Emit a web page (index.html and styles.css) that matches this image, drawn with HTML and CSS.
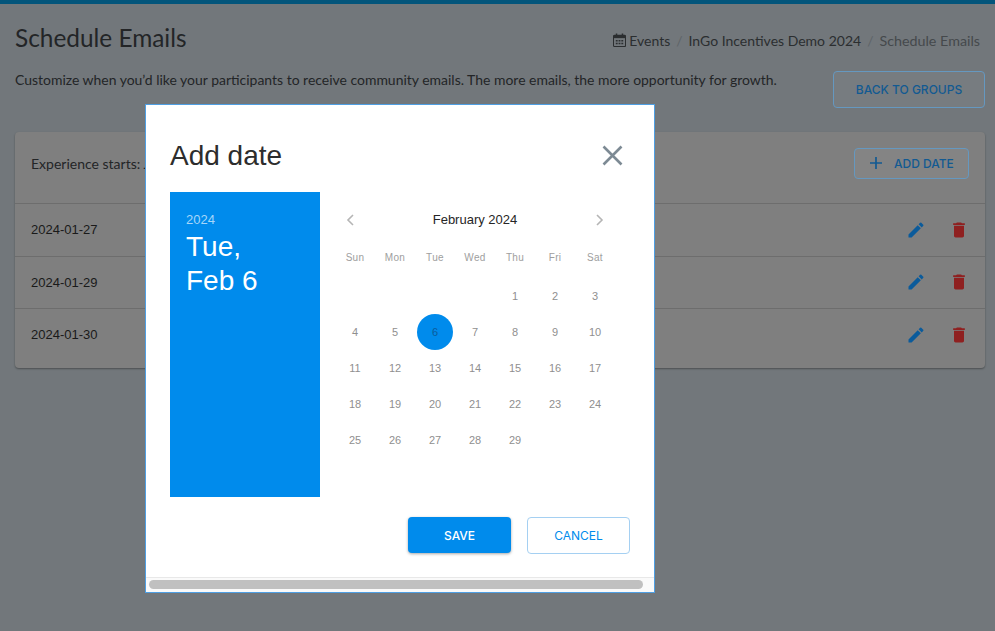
FILE: index.html
```html
<!DOCTYPE html>
<html lang="en">
<head>
  <meta charset="UTF-8">
  <meta name="viewport" content="width=device-width, initial-scale=1.0">
  <title>Schedule Emails</title>
  <link rel="stylesheet" href="styles.css">
</head>
<body>
  <div class="topbar"></div>

  <main class="page">
    <div class="page-head">
      <h1>Schedule Emails</h1>
      <nav class="crumbs">
        <svg class="crumb-icon" viewBox="0 0 14 15" width="13" height="14">
          <path d="M1.5 2.5h11a1 1 0 0 1 1 1v10a1 1 0 0 1-1 1h-11a1 1 0 0 1-1-1v-10a1 1 0 0 1 1-1z" fill="none" stroke="#2b2e30" stroke-width="1.2"/>
          <path d="M.5 3h13v2.5H.5z" fill="#2b2e30"/>
          <path d="M3 .5h1.6v3H3zM9.4 .5H11v3H9.4z" fill="#2b2e30"/>
          <path d="M3 7.5h2V9H3zM6 7.5h2V9H6zM9 7.5h2V9H9zM3 10.5h2V12H3zM6 10.5h2V12H6zM9 10.5h2V12H9z" fill="#2b2e30"/>
        </svg>
        <span>Events</span>
        <span class="sep">/</span>
        <span>InGo Incentives Demo 2024</span>
        <span class="sep">/</span>
        <span class="crumb-current">Schedule Emails</span>
      </nav>
    </div>

    <div class="intro">
      <p>Customize when you’d like your participants to receive community emails. The more emails, the more opportunity for growth.</p>
      <button class="btn-outline btn-back">BACK TO GROUPS</button>
    </div>

    <section class="card">
      <div class="card-head">
        <span>Experience starts: Jan 2024</span>
        <button class="btn-outline btn-add">
          <svg viewBox="0 0 12 12" width="12" height="12"><path d="M6 0v12M0 6h12" stroke="#125a92" stroke-width="1.7" fill="none"/></svg>
          ADD DATE
        </button>
      </div>

      <div class="date-row">
        <span>2024-01-27</span>
        <div class="row-actions">
          <svg viewBox="0 0 24 24" width="20" height="20"><path class="pencil" d="M3 17.25V21h3.75L17.81 9.94l-3.75-3.75L3 17.25zM20.71 7.04a1 1 0 0 0 0-1.41l-2.34-2.34a1 1 0 0 0-1.41 0l-1.83 1.83 3.75 3.75 1.83-1.83z"/></svg>
          <svg viewBox="0 0 24 24" width="20" height="20"><path class="trash" d="M6 19c0 1.1.9 2 2 2h8c1.1 0 2-.9 2-2V7H6v12zM19 4h-3.5l-1-1h-5l-1 1H5v2h14V4z"/></svg>
        </div>
      </div>
      <div class="date-row">
        <span>2024-01-29</span>
        <div class="row-actions">
          <svg viewBox="0 0 24 24" width="20" height="20"><path class="pencil" d="M3 17.25V21h3.75L17.81 9.94l-3.75-3.75L3 17.25zM20.71 7.04a1 1 0 0 0 0-1.41l-2.34-2.34a1 1 0 0 0-1.41 0l-1.83 1.83 3.75 3.75 1.83-1.83z"/></svg>
          <svg viewBox="0 0 24 24" width="20" height="20"><path class="trash" d="M6 19c0 1.1.9 2 2 2h8c1.1 0 2-.9 2-2V7H6v12zM19 4h-3.5l-1-1h-5l-1 1H5v2h14V4z"/></svg>
        </div>
      </div>
      <div class="date-row">
        <span>2024-01-30</span>
        <div class="row-actions">
          <svg viewBox="0 0 24 24" width="20" height="20"><path class="pencil" d="M3 17.25V21h3.75L17.81 9.94l-3.75-3.75L3 17.25zM20.71 7.04a1 1 0 0 0 0-1.41l-2.34-2.34a1 1 0 0 0-1.41 0l-1.83 1.83 3.75 3.75 1.83-1.83z"/></svg>
          <svg viewBox="0 0 24 24" width="20" height="20"><path class="trash" d="M6 19c0 1.1.9 2 2 2h8c1.1 0 2-.9 2-2V7H6v12zM19 4h-3.5l-1-1h-5l-1 1H5v2h14V4z"/></svg>
        </div>
      </div>
    </section>
  </main>

  <!-- Add date dialog -->
  <div class="modal">
    <div class="modal-body">
      <div class="modal-head">
        <h2>Add date</h2>
        <svg viewBox="0 0 21 21" width="21" height="21"><path d="M1.5 1.5l18 18M19.5 1.5l-18 18" stroke="#7d8a94" stroke-width="2.6" fill="none"/></svg>
      </div>

      <div class="picker">
        <div class="picker-side">
          <div class="picker-year">2024</div>
          <div class="picker-date">Tue,<br>Feb 6</div>
        </div>
        <div class="calendar">
          <div class="cal-head">
            <svg viewBox="0 0 8 12" width="8" height="12"><path d="M7 1L2 6l5 5" stroke="#b5b5b5" stroke-width="1.6" fill="none"/></svg>
            <span>February 2024</span>
            <svg viewBox="0 0 8 12" width="8" height="12"><path d="M1 1l5 5-5 5" stroke="#b5b5b5" stroke-width="1.6" fill="none"/></svg>
          </div>
          <div class="cal-days">
            <span>Sun</span><span>Mon</span><span>Tue</span><span>Wed</span><span>Thu</span><span>Fri</span><span>Sat</span>
          </div>
          <div class="cal-grid">
            <span></span><span></span><span></span><span></span><span>1</span><span>2</span><span>3</span>
            <span>4</span><span>5</span><span class="selected">6</span><span>7</span><span>8</span><span>9</span><span>10</span>
            <span>11</span><span>12</span><span>13</span><span>14</span><span>15</span><span>16</span><span>17</span>
            <span>18</span><span>19</span><span>20</span><span>21</span><span>22</span><span>23</span><span>24</span>
            <span>25</span><span>26</span><span>27</span><span>28</span><span>29</span>
          </div>
        </div>
      </div>

      <div class="modal-actions">
        <button class="btn-save">SAVE</button>
        <button class="btn-cancel">CANCEL</button>
      </div>
    </div>
    <div class="modal-scroll"><div class="modal-thumb"></div></div>
  </div>
</body>
</html>
```

FILE: styles.css
```css
* {
  box-sizing: border-box;
}
body {
  margin: 0;
  height: 631px;
  overflow: hidden;
  background: #72777b;
  color: #232527;
  font-family: "Lato", "Open Sans", sans-serif;
}
button {
  font-family: "Inter", "Liberation Sans", sans-serif;
  cursor: pointer;
}
.topbar {
  height: 4px;
  background: #03557b;
}
.page {
  padding: 0 10px 0 15px;
}
.page-head {
  display: flex;
  justify-content: space-between;
  align-items: center;
  height: 66px;
  padding-right: 5px;
}
.page-head h1 {
  margin: 0;
  font-size: 24.4px;
  font-weight: 400;
  color: #232527;
}
.crumbs {
  display: flex;
  align-items: center;
  gap: 4px;
  margin-top: 6px;
  font-size: 14px;
  color: #2b2e30;
}
.crumb-icon {
  margin-right: -1px;
}
.crumbs .sep {
  margin: 0 2px;
  color: #5e6468;
}
.crumb-current {
  font-size: 14.3px;
  color: #45494c;
}
.intro {
  display: flex;
  justify-content: space-between;
  align-items: flex-start;
  height: 62px;
}
.intro p {
  margin: 0;
  padding-top: 1px;
  font-size: 13.96px;
  line-height: 17px;
}
.btn-outline {
  background: rgba(255, 255, 255, .04);
  border: 1px solid #6598c0;
  border-radius: 4px;
  color: #125a92;
  font-size: 12px;
  font-weight: 500;
}
.btn-back {
  width: 152px;
  height: 37px;
  margin-top: 1px;
}
.card {
  background: #7f7f7f;
  border-radius: 4px;
  box-shadow: 0 1px 2px rgba(0, 0, 0, .35);
  padding-bottom: 8px;
}
.card-head {
  display: flex;
  justify-content: space-between;
  align-items: center;
  height: 72px;
  padding: 0 16px 9px;
  font-size: 14px;
  border-bottom: 1px solid #6d6d6d;
}
.btn-add {
  display: flex;
  align-items: center;
  gap: 12px;
  width: 115px;
  height: 31px;
  padding-left: 15px;
}
.date-row {
  display: flex;
  justify-content: space-between;
  align-items: center;
  height: 52.5px;
  padding: 0 16px;
  font-family: "Liberation Sans", Arial, sans-serif;
  font-size: 13px;
  color: #1a1a1a;
  border-bottom: 1px solid #6d6d6d;
}
.date-row:last-child {
  height: 51px;
  border-bottom: 0;
}
.row-actions {
  display: flex;
  gap: 23px;
}
.pencil {
  fill: #0b5b9b;
}
.trash {
  fill: #8f2020;
}

.modal {
  position: absolute;
  left: 145px;
  top: 104px;
  width: 510px;
  height: 489px;
  background: #fff;
  border: 1px solid #4f9fe3;
  font-family: "Liberation Sans", Arial, sans-serif;
  display: flex;
  flex-direction: column;
}
.modal-body {
  flex: 1;
  padding: 0 24px;
}
.modal-head {
  display: flex;
  justify-content: space-between;
  align-items: center;
  height: 87px;
  padding-top: 13px;
  padding-right: 7px;
}
.modal-head h2 {
  margin: 2px 0 0;
  font-size: 28px;
  font-weight: 400;
  color: #2d2d2d;
}
.picker {
  display: flex;
  height: 305px;
}
.picker-side {
  width: 150px;
  padding: 20px 16px;
  background: #008bec;
  color: #fff;
}
.picker-year {
  font-size: 13px;
  line-height: 15px;
  color: #a6d6f9;
}
.picker-date {
  margin-top: 3px;
  font-size: 28px;
  line-height: 34px;
}
.calendar {
  margin-left: 15px;
  width: 280px;
}
.cal-head {
  display: flex;
  justify-content: space-between;
  align-items: center;
  height: 54px;
  padding: 0 11px;
  font-size: 13px;
  color: #262626;
}
.cal-head svg {
  margin-top: 2px;
}
.cal-days {
  display: grid;
  grid-template-columns: repeat(7, 40px);
  height: 32px;
  line-height: 24px;
  font-size: 10px;
  letter-spacing: .3px;
  color: #9e9e9e;
  text-align: center;
}
.cal-grid {
  display: grid;
  grid-template-columns: repeat(7, 40px);
  grid-auto-rows: 36px;
  font-size: 11px;
  color: #8f8f8f;
}
.cal-grid span {
  display: flex;
  justify-content: center;
  align-items: center;
}
.cal-grid .selected {
  width: 36px;
  height: 36px;
  margin-left: 2px;
  border-radius: 50%;
  background: #008bec;
  color: #0b5b9b;
}
.modal-actions {
  display: flex;
  justify-content: flex-end;
  gap: 16px;
  padding-top: 20px;
}
.btn-save {
  width: 103px;
  height: 36px;
  border: 0;
  border-radius: 4px;
  background: #008bec;
  color: #fff;
  font-size: 12px;
  font-weight: 500;
  box-shadow: 0 1px 3px rgba(0, 0, 0, .35);
}
.btn-cancel {
  width: 103px;
  height: 37px;
  background: #fff;
  border: 1px solid #a5d0f2;
  border-radius: 4px;
  color: #008bec;
  font-size: 12px;
  font-weight: 400;
}
.modal-scroll {
  height: 15px;
  padding: 2px 11px 2px 3px;
  background: #fafafa;
  border-top: 1px solid #e8e8e8;
}
.modal-thumb {
  height: 9px;
  border-radius: 5px;
  background: #c0c0c0;
}
```
